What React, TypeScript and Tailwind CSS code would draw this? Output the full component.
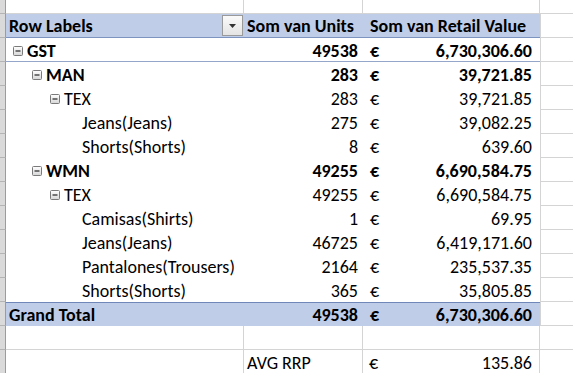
import React from 'react';

type Row = {
  label: string;
  level: number; // 0,1,2 = collapsible group, 3 = leaf
  units: string;
  value: string;
  bold?: boolean;
  groupLine?: boolean;
};

const rows: Row[] = [
  { label: 'GST', level: 0, units: '49538', value: '6,730,306.60', bold: true, groupLine: true },
  { label: 'MAN', level: 1, units: '283', value: '39,721.85', bold: true },
  { label: 'TEX', level: 2, units: '283', value: '39,721.85' },
  { label: 'Jeans(Jeans)', level: 3, units: '275', value: '39,082.25' },
  { label: 'Shorts(Shorts)', level: 3, units: '8', value: '639.60' },
  { label: 'WMN', level: 1, units: '49255', value: '6,690,584.75', bold: true },
  { label: 'TEX', level: 2, units: '49255', value: '6,690,584.75' },
  { label: 'Camisas(Shirts)', level: 3, units: '1', value: '69.95' },
  { label: 'Jeans(Jeans)', level: 3, units: '46725', value: '6,419,171.60' },
  { label: 'Pantalones(Trousers)', level: 3, units: '2164', value: '235,537.35' },
  { label: 'Shorts(Shorts)', level: 3, units: '365', value: '35,805.85' },
];

const indent = ['pl-[7px]', 'pl-[26px]', 'pl-[44px]', 'pl-[76px]'];

function Minus() {
  return (
    <svg width="10" height="10" viewBox="0 0 10 10" className="mr-[4px] shrink-0">
      <defs>
        <linearGradient id="mg" x1="0" y1="0" x2="0" y2="1">
          <stop offset="0" stopColor="#ffffff" />
          <stop offset="1" stopColor="#d6d6d6" />
        </linearGradient>
      </defs>
      <rect x="0.5" y="0.5" width="9" height="9" rx="1" fill="url(#mg)" stroke="#7a7a7a" />
      <line x1="2.5" y1="5" x2="7.5" y2="5" stroke="#222" strokeWidth="1.2" />
    </svg>
  );
}

function Strip() {
  return <div className="w-[6px] shrink-0 bg-[#dadada] border-r border-b border-r-[#9c9c9c] border-b-[#b4b4b4]" />;
}

function Tail() {
  return <div className="flex-1 border-b border-[#d4d4d4]" />;
}

export default function App() {
  return (
    <div
      className="w-[573px] h-[373px] overflow-hidden bg-white text-[18px] text-black leading-none"
      style={{ fontFamily: 'Carlito, "Liberation Sans", Arial, sans-serif' }}
    >
      {/* top partial row */}
      <div className="flex h-[14px]">
        <Strip />
        <div className="w-[238px] border-r border-b border-[#d4d4d4]" />
        <div className="w-[119px] border-r border-b border-[#d4d4d4]" />
        <div className="w-[177px] border-r border-b border-[#d4d4d4]" />
        <Tail />
      </div>

      {/* header */}
      <div className="flex h-[24px]">
        <Strip />
        <div className="flex w-[534px] bg-[#bfcde9] border-b border-[#7d93c0] font-bold">
          <div className="w-[238px] flex items-center justify-between pl-[3px] pr-[1px] pt-[1px]">
            <span>Row Labels</span>
            <div className="w-[21px] h-[21px] mb-[1px] border border-[#9a9a9a] bg-gradient-to-b from-[#fafafa] to-[#e4e4e4] flex items-center justify-center">
              <svg width="7" height="4" viewBox="0 0 7 4">
                <path d="M0 0 H7 L3.5 4 Z" fill="#333" />
              </svg>
            </div>
          </div>
          <div className="w-[119px] flex items-center pl-[3px] pt-[1px] whitespace-nowrap">Som van Units</div>
          <div className="w-[177px] flex items-center pl-[7px] pt-[1px] whitespace-nowrap">Som van Retail Value</div>
        </div>
        <div className="flex-1 border-l border-b border-[#d4d4d4]" />
      </div>

      {rows.map((r, i) => (
        <div key={i} className="flex h-[24px]">
          <Strip />
          <div className={`flex w-[534px] ${r.bold ? 'font-bold' : ''} ${r.groupLine ? 'border-b border-[#94a6ca]' : ''}`}>
            <div className={`w-[238px] flex items-center pt-[2px] ${indent[r.level]}`}>
              {r.level < 3 && <Minus />}
              <span>{r.label}</span>
            </div>
            <div className="w-[119px] flex items-center justify-end pr-[5px] pt-[2px]">{r.units}</div>
            <div className="w-[177px] flex items-center justify-between pl-[7px] pr-[8px] pt-[2px]">
              <span>€</span>
              <span>{r.value}</span>
            </div>
          </div>
          <div className="flex-1 border-l border-b border-[#d4d4d4]" />
        </div>
      ))}

      {/* grand total */}
      <div className="flex h-[24px]">
        <Strip />
        <div className="flex w-[534px] bg-[#bfcde9] border-t border-[#6f88b9] font-bold">
          <div className="w-[238px] flex items-center pl-[3px] pt-[1px]">Grand Total</div>
          <div className="w-[119px] flex items-center justify-end pr-[5px] pt-[1px]">49538</div>
          <div className="w-[177px] flex items-center justify-between pl-[7px] pr-[8px] pt-[1px]">
            <span>€</span>
            <span>6,730,306.60</span>
          </div>
        </div>
        <div className="flex-1 border-l border-b border-[#d4d4d4]" />
      </div>

      {/* empty row */}
      <div className="flex h-[24px]">
        <Strip />
        <div className="w-[238px] border-r border-b border-[#d4d4d4]" />
        <div className="w-[119px] border-r border-b border-[#d4d4d4]" />
        <div className="w-[177px] border-r border-b border-[#d4d4d4]" />
        <Tail />
      </div>

      {/* avg rrp */}
      <div className="flex h-[24px]">
        <Strip />
        <div className="w-[238px] border-r border-b border-[#d4d4d4]" />
        <div className="w-[119px] border-r border-b border-[#d4d4d4] flex items-center pl-[3px] pt-[2px]">AVG RRP</div>
        <div className="w-[177px] border-r border-b border-[#d4d4d4] flex items-center justify-between pl-[6px] pr-[7px] pt-[2px]">
          <span>€</span>
          <span>135.86</span>
        </div>
        <Tail />
      </div>
    </div>
  );
}
